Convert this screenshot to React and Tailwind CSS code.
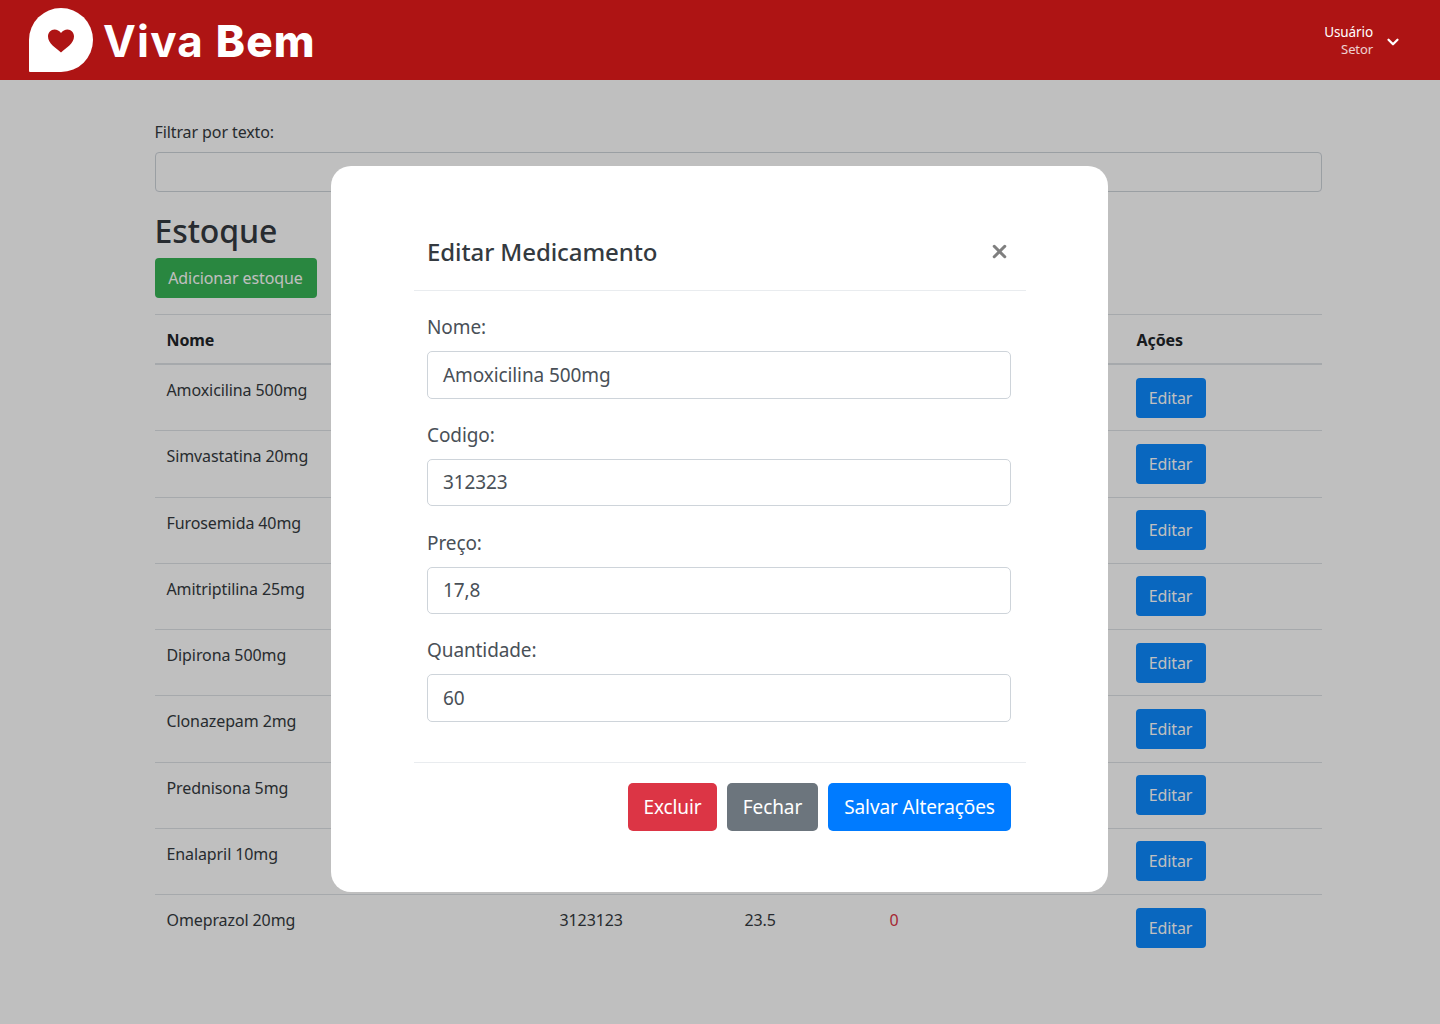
import React from 'react';
import { ChevronDown, X } from 'lucide-react';

const rows = [
    { nome: 'Amoxicilina 500mg' },
    { nome: 'Simvastatina 20mg' },
    { nome: 'Furosemida 40mg' },
    { nome: 'Amitriptilina 25mg' },
    { nome: 'Dipirona 500mg' },
    { nome: 'Clonazepam 2mg' },
    { nome: 'Prednisona 5mg' },
    { nome: 'Enalapril 10mg' },
    { nome: 'Omeprazol 20mg', codigo: '3123123', preco: '23.5', qtd: '0' },
];

const fields = [
    { label: 'Nome:', value: 'Amoxicilina 500mg' },
    { label: 'Codigo:', value: '312323' },
    { label: 'Preço:', value: '17,8' },
    { label: 'Quantidade:', value: '60' },
];

const Logo = () => (
    <svg width="64" height="64" viewBox="0 0 64 64" className="shrink-0">
        <path d="M32 0a32 32 0 0 1 0 64H1a1 1 0 0 1-1-1V32A32 32 0 0 1 32 0z" fill="#ffffff" />
        <path d="M32 44.500 C27 40 19 35.500 19 28.500 C19 24.500 22 21.500 25.500 21.500 C28 21.500 30.500 22.700 32 25 C33.500 22.700 36 21.500 38.500 21.500 C42 21.500 45 24.500 45 28.500 C45 35.500 37 40 32 44.500z" fill="#ae1414" />
    </svg>
);

const Row = ({ row }) => (
    <div className="grid grid-cols-[393px_185px_145px_246px_198px] h-[66.25px] border-t border-[#dee2e6] text-[#343a40]">
        <div className="pl-3 pt-[13px] leading-6">{row.nome}</div>
        <div className="pl-3 pt-[13px] leading-6">{row.codigo}</div>
        <div className="pl-3 pt-[13px] leading-6">{row.preco}</div>
        <div className="pl-3 pt-[13px] leading-6 text-[#dc3545]">{row.qtd}</div>
        <div className="pl-3 pt-[12.5px]">
            <button className="w-[70px] h-10 rounded bg-[#0d8aff] text-white">Editar</button>
        </div>
    </div>
);

const Field = ({ label, value }) => (
    <div className="mb-[21.25px]">
        <label className="block text-[19px] leading-[30px] mb-[9px] text-[#495057]">{label}</label>
        <div className="h-[47.5px] px-[15px] flex items-center border border-[#ced4da] rounded-[5px] text-[19px] text-[#495057]">{value}</div>
    </div>
);

const App = () => {
    return (
        <div className="relative min-h-[1024px] bg-white font-['Noto_Sans',sans-serif] text-base tracking-[-0.1px] text-[#343a40]">
            <header className="relative z-20 h-20 bg-[#ae1414] flex items-center justify-between pl-[29px] pr-[38px]">
                <div className="flex items-center gap-[10px]">
                    <Logo />
                    <span className="pt-[2px] font-['Inter',sans-serif] font-bold text-[44px] leading-none tracking-[1.2px] text-white">
                        Viva <span className="font-extrabold">Bem</span>
                    </span>
                </div>
                <div className="flex items-center gap-[11px]">
                    <div className="text-right text-white">
                        <div className="text-[13.5px] leading-[18px]">Usuário</div>
                        <div className="text-[13px] leading-[16px] text-white/80">Setor</div>
                    </div>
                    <ChevronDown className="w-[18px] h-[18px] mt-[3px] text-white" strokeWidth={3} />
                </div>
            </header>

            <main className="w-[1167.5px] ml-[154.5px] pt-10">
                <label className="block leading-6 mb-2">Filtrar por texto:</label>
                <div className="h-10 border border-[#ced4da] rounded bg-white" />
                <h1 className="mt-[18px] text-[32px] leading-[42px] font-medium">Estoque</h1>
                <button className="mt-[6px] w-[162px] h-10 rounded bg-[#37b456] text-white">Adicionar estoque</button>
                <div className="mt-[16px]">
                    <div className="grid grid-cols-[393px_185px_145px_246px_198px] h-[49px] pt-[2px] items-center border-t border-[#dee2e6] font-bold text-[#212529]">
                        <div className="pl-3">Nome</div>
                        <div className="pl-3">Código</div>
                        <div className="pl-3">Preço</div>
                        <div className="pl-3">Quantidade</div>
                        <div className="pl-[13px]">Ações</div>
                    </div>
                    <div className="border-t border-[#dee2e6]">
                        {rows.map((row) => (
                            <Row key={row.nome} row={row} />
                        ))}
                    </div>
                </div>
            </main>

            <div className="fixed inset-0 z-10 bg-black/25 flex justify-start pl-[331px] pt-[166px]">
                <div className="w-[777px] h-[726px] bg-white rounded-[20px] pl-[83px] pr-[82px] pt-[64px]">
                    <div className="h-[61px] px-[13px] flex items-start justify-between border-b border-[#e9ecef]">
                        <h2 className="text-[24px] leading-[44px] font-medium text-[#343a40]">Editar Medicamento</h2>
                        <X className="w-[21px] h-[21px] mt-[11px] mr-[3px] text-[#7f7f7f]" strokeWidth={3.5} />
                    </div>
                    <div className="pl-[13px] pr-[15px] pt-[21px]">
                        {fields.map((f) => (
                            <Field key={f.label} label={f.label} value={f.value} />
                        ))}
                    </div>
                    <div className="mt-[40.5px] pt-5 pr-[15px] border-t border-[#e9ecef] flex justify-end gap-[10px]">
                        <button className="w-[89px] h-12 rounded-[5px] bg-[#dc3545] text-white text-[19px]">Excluir</button>
                        <button className="w-[91px] h-12 rounded-[5px] bg-[#6c757d] text-white text-[19px]">Fechar</button>
                        <button className="w-[183px] h-12 rounded-[5px] bg-[#007bff] text-white text-[19px]">Salvar Alterações</button>
                    </div>
                </div>
            </div>
        </div>
    );
};

export default App;
